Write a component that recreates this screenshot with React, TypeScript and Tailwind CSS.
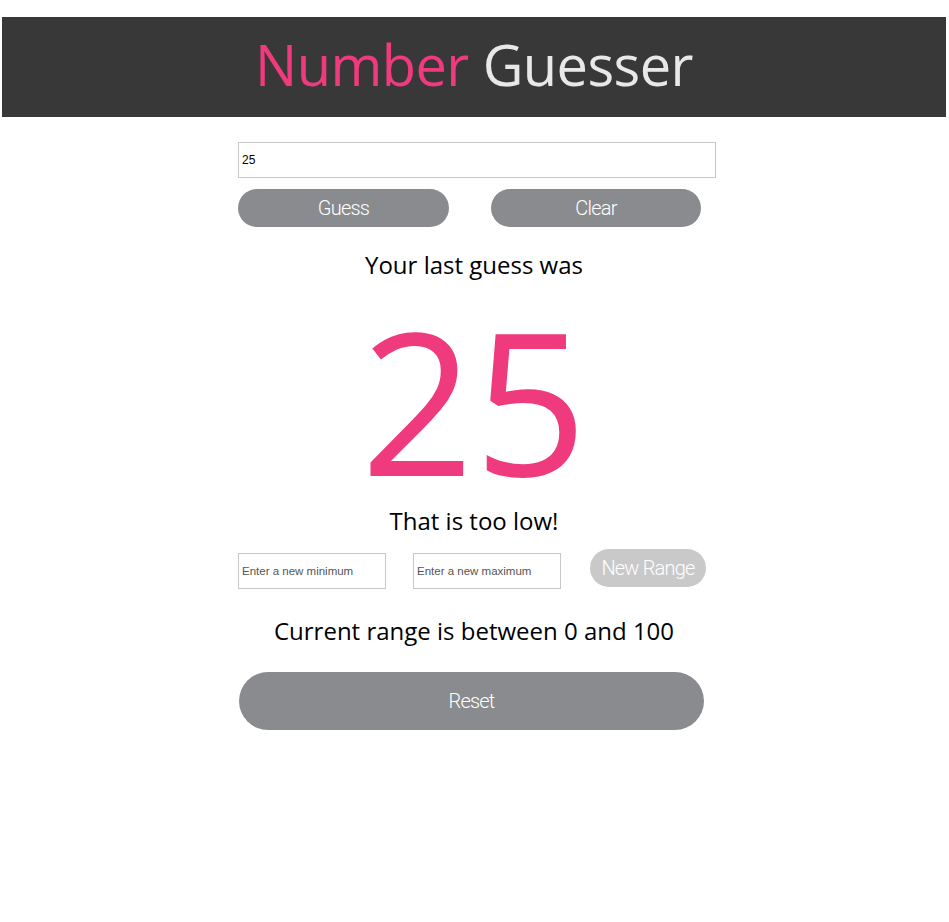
import React, { useState } from "react";

const pill =
  "rounded-full bg-[#8a8b8e] text-white text-[20px] font-light tracking-[-0.04em] [font-family:Roboto,'Liberation_Sans',sans-serif]";

export default function App() {
  const [guess, setGuess] = useState("25");
  const [min, setMin] = useState("");
  const [max, setMax] = useState("");

  return (
    <div className="min-h-[922px] bg-white pt-[17px] pl-[2px] pr-[3px] [font-family:'Open_Sans',sans-serif]">
      {/* header */}
      <header className="h-[100px] bg-[#383838] flex items-center justify-center">
        <h1 className="text-[56px] leading-none -mt-[6px] tracking-[-0.01em]">
          <span className="text-[#ef3a7d]">Number</span>{" "}
          <span className="text-[#e8e8e8]">Guesser</span>
        </h1>
      </header>

      <div className="flex justify-center pl-[6px]">
        <main className="w-[478px] flex flex-col">
          <input
            value={guess}
            onChange={(e) => setGuess(e.target.value)}
            className="mt-[25px] h-[36px] border border-[#c8c8c8] px-[3px] text-[12px] text-black outline-none [font-family:'Liberation_Sans',sans-serif]"
          />

          <div className="mt-[11px] flex gap-[42px]">
            <button className={`${pill} w-[211px] h-[38px]`}>Guess</button>
            <button className={`${pill} w-[210px] h-[38px]`}>Clear</button>
          </div>

          <p className="mt-[22px] text-center text-[24px] leading-[32px] text-black pr-[6px]">
            Your last guess was
          </p>

          <p className="mt-[26px] text-center text-[198px] leading-[184px] text-[#ef3a7d] pr-[6px]">
            25
          </p>

          <p className="mt-[14px] text-center text-[24px] leading-[32px] text-black pr-[6px]">
            That is too low!
          </p>

          <div className="mt-[16px] flex items-center">
            <input
              value={min}
              onChange={(e) => setMin(e.target.value)}
              placeholder="Enter a new minimum"
              className="w-[148px] h-[36px] border border-[#c8c8c8] px-[3px] text-[11.5px] text-black placeholder:text-[#555] outline-none [font-family:'Liberation_Sans',sans-serif]"
            />
            <input
              value={max}
              onChange={(e) => setMax(e.target.value)}
              placeholder="Enter a new maximum"
              className="ml-[27px] w-[148px] h-[36px] border border-[#c8c8c8] px-[3px] text-[11.5px] text-black placeholder:text-[#555] outline-none [font-family:'Liberation_Sans',sans-serif]"
            />
            <button className="ml-[29px] -mt-[6px] w-[116px] h-[38px] rounded-full bg-[#c9c9ca] text-white text-[20px] font-light tracking-[-0.04em] [font-family:Roboto,'Liberation_Sans',sans-serif]">
              New Range
            </button>
          </div>

          <p className="mt-[26px] text-center text-[24px] leading-[32px] text-black pr-[6px]">
            Current range is between 0 and 100
          </p>

          <button className={`${pill} mt-[25px] ml-[1px] w-[465px] h-[58px]`}>Reset</button>
        </main>
      </div>
    </div>
  );
}
